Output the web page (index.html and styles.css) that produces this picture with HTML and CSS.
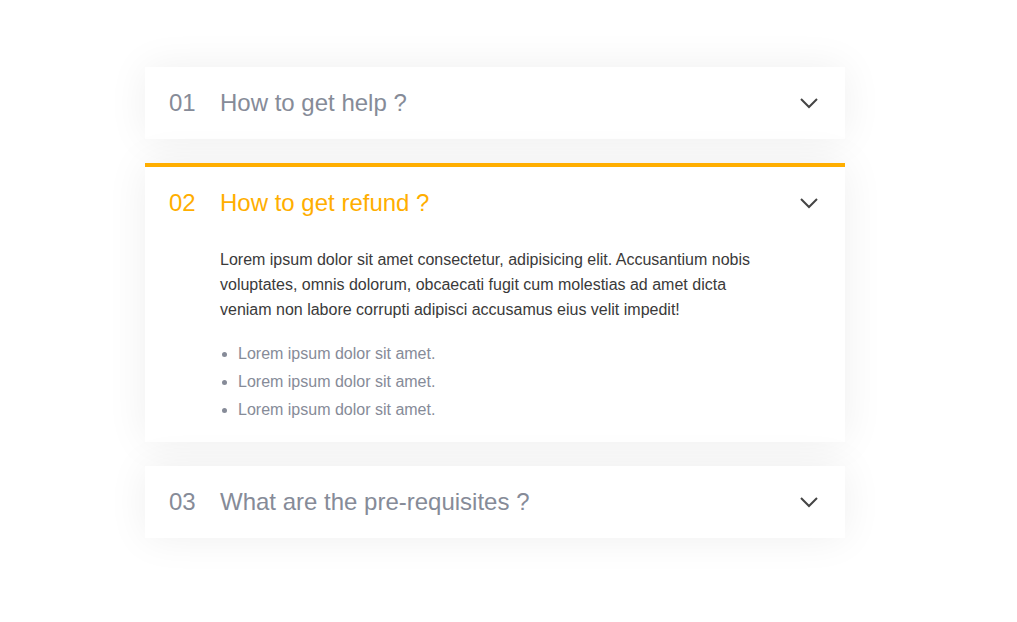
FILE: index.html
```html
<!DOCTYPE html>
<html lang="en">
<head>
<meta charset="utf-8">
<title>FAQ</title>
<link rel="stylesheet" href="styles.css">
</head>
<body>
<div class="faq">
  <div class="item">
    <div class="head">
      <span class="num">01</span>
      <span class="title">How to get help ?</span>
      <svg class="chev" viewBox="0 0 24 24" width="24" height="24"><path d="M4 8l8 8 8-8" fill="none" stroke="#444" stroke-width="2"/></svg>
    </div>
  </div>
  <div class="item open">
    <div class="head">
      <span class="num">02</span>
      <span class="title">How to get refund ?</span>
      <svg class="chev" viewBox="0 0 24 24" width="24" height="24"><path d="M4 8l8 8 8-8" fill="none" stroke="#444" stroke-width="2"/></svg>
    </div>
    <div class="body">
      <p>Lorem ipsum dolor sit amet consectetur, adipisicing elit. Accusantium nobis voluptates, omnis dolorum, obcaecati fugit cum molestias ad amet dicta veniam non labore corrupti adipisci accusamus eius velit impedit!</p>
      <ul>
        <li>Lorem ipsum dolor sit amet.</li>
        <li>Lorem ipsum dolor sit amet.</li>
        <li>Lorem ipsum dolor sit amet.</li>
      </ul>
    </div>
  </div>
  <div class="item">
    <div class="head">
      <span class="num">03</span>
      <span class="title">What are the pre-requisites ?</span>
      <svg class="chev" viewBox="0 0 24 24" width="24" height="24"><path d="M4 8l8 8 8-8" fill="none" stroke="#444" stroke-width="2"/></svg>
    </div>
  </div>
</div>
</body>
</html>
```
FILE: styles.css
```css
html, body {
  margin: 0;
  padding: 0;
  background: #fff;
  font-family: "Liberation Sans", Arial, sans-serif;
}
.faq {
  width: 700px;
  padding: 67px 0 84px 145px;
  display: flex;
  flex-direction: column;
  gap: 24px;
}
.item {
  background: #fff;
  box-shadow: 0 0 40px rgba(0, 0, 0, 0.065);
}
.item.open {
  border-top: 4px solid #ffae00;
}
.head {
  display: flex;
  align-items: center;
  padding: 24px;
  font-size: 24px;
  line-height: 24px;
  color: #868b98;
}
.open .head {
  color: #ffae00;
}
.num {
  width: 51px;
  flex: none;
}
.title {
  flex: 1;
}
.chev {
  flex: none;
  display: block;
}
.body {
  padding: 8px 75px 18px 75px;
}
.body p {
  margin: 0 0 18px;
  font-size: 16px;
  line-height: 25px;
  color: #3a3a3a;
}
.body ul {
  margin: 0;
  padding-left: 18px;
  font-size: 16px;
  line-height: 28px;
  color: #868b98;
}
```
